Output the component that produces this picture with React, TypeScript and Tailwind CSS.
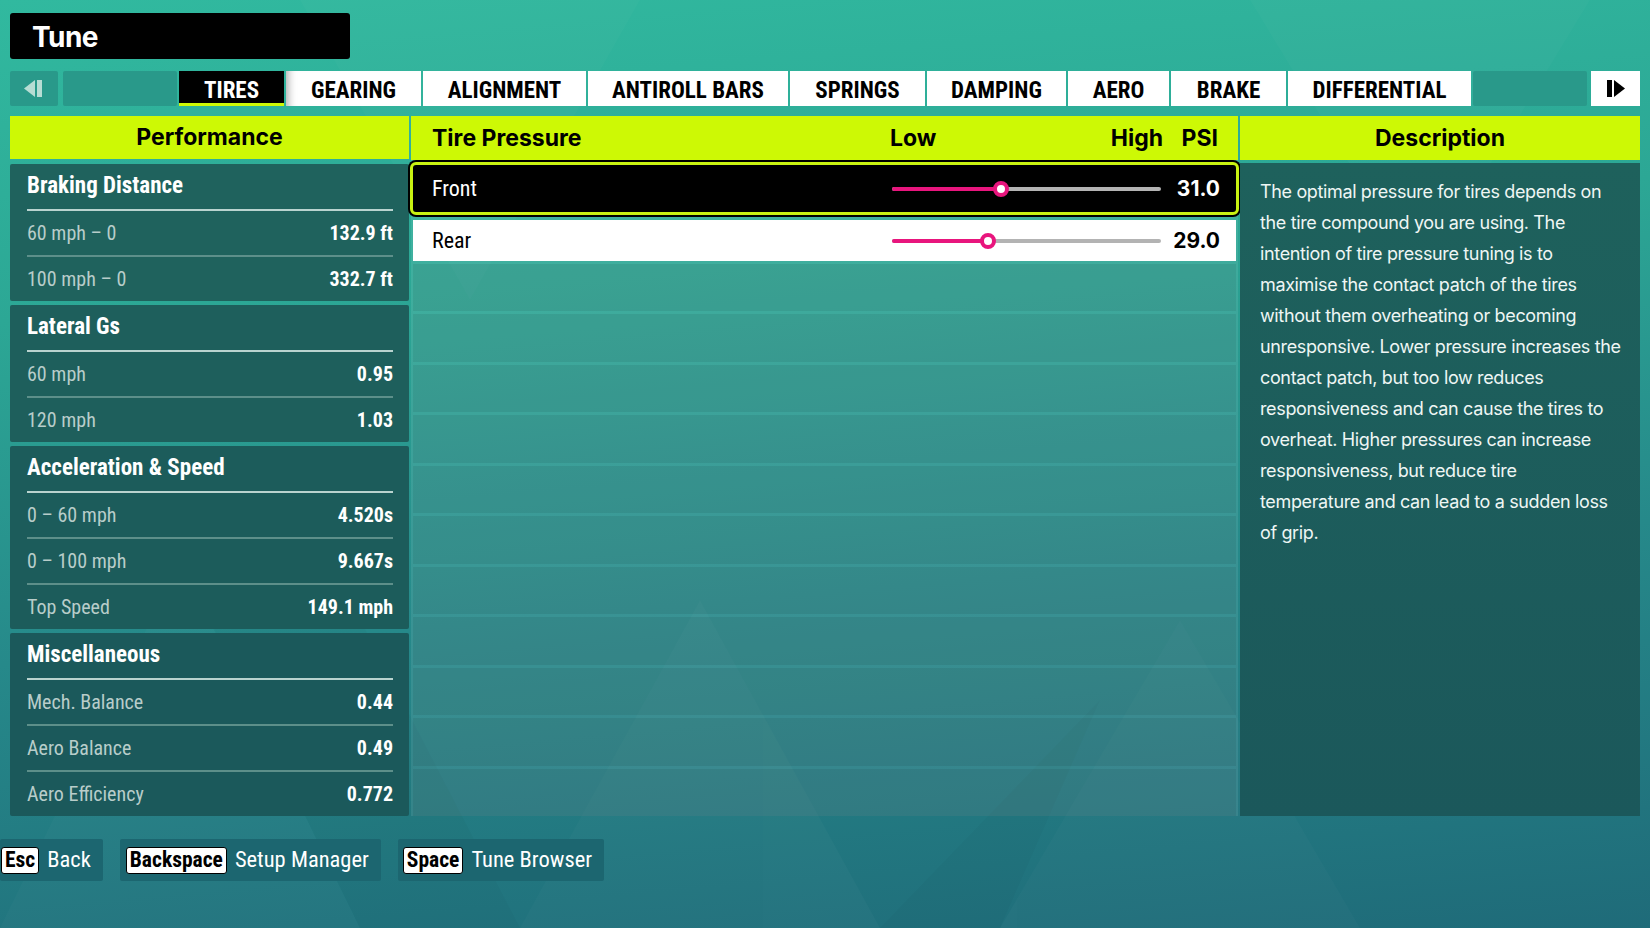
import React from "react";

const COND =
  "font-['Roboto_Condensed','Liberation_Sans_Narrow','Arial_Narrow','DejaVu_Sans_Condensed',Roboto,sans-serif] font-stretch-condensed";
const SANS = "font-['Inter','Noto_Sans',sans-serif]";

type Tab = { label: string; w: string; active?: boolean };

const tabs: Tab[] = [
  { label: "TIRES", w: "w-[105px]", active: true },
  { label: "GEARING", w: "w-[135px]" },
  { label: "ALIGNMENT", w: "w-[163px]" },
  { label: "ANTIROLL BARS", w: "w-[200px]" },
  { label: "SPRINGS", w: "w-[135px]" },
  { label: "DAMPING", w: "w-[139px]" },
  { label: "AERO", w: "w-[101px]" },
  { label: "BRAKE", w: "w-[115px]" },
  { label: "DIFFERENTIAL", w: "w-[183px]" },
];

type Stat = { title: string; bg: string; rows: [string, string][] };

const stats: Stat[] = [
  {
    title: "Braking Distance",
    bg: "bg-[#1f625d]",
    rows: [
      ["60 mph – 0", "132.9 ft"],
      ["100 mph – 0", "332.7 ft"],
    ],
  },
  {
    title: "Lateral Gs",
    bg: "bg-[#1e5f5c]",
    rows: [
      ["60 mph", "0.95"],
      ["120 mph", "1.03"],
    ],
  },
  {
    title: "Acceleration & Speed",
    bg: "bg-[#1c5c5b]",
    rows: [
      ["0 – 60 mph", "4.520s"],
      ["0 – 100 mph", "9.667s"],
      ["Top Speed", "149.1 mph"],
    ],
  },
  {
    title: "Miscellaneous",
    bg: "bg-[#1b595b]",
    rows: [
      ["Mech. Balance", "0.44"],
      ["Aero Balance", "0.49"],
      ["Aero Efficiency", "0.772"],
    ],
  },
];

const description = [
  "The optimal pressure for tires depends on",
  "the tire compound you are using. The",
  "intention of tire pressure tuning is to",
  "maximise the contact patch of the tires",
  "without them overheating or becoming",
  "unresponsive. Lower pressure increases the",
  "contact patch, but too low reduces",
  "responsiveness and can cause the tires to",
  "overheat. Higher pressures can increase",
  "responsiveness, but reduce tire",
  "temperature and can lead to a sudden loss",
  "of grip.",
];

function PrevIcon() {
  return (
    <svg width="22" height="17" viewBox="0 0 22 17">
      <polygon points="12,0 12,17 1,8.5" fill="#b7ddd4" />
      <rect x="14" y="0" width="5" height="17" fill="#b7ddd4" />
    </svg>
  );
}

function NextIcon() {
  return (
    <svg width="22" height="17" viewBox="0 0 22 17">
      <rect x="2" y="0" width="5" height="17" fill="#000" />
      <polygon points="9,0 9,17 20,8.5" fill="#000" />
    </svg>
  );
}

function Slider({ pct }: { pct: number }) {
  return (
    <div className="relative w-[269px] h-[16px] flex items-center">
      <div className="w-full h-[4px] rounded-full bg-[#b3b3b3]" />
      <div
        className="absolute left-0 h-[4px] rounded-full bg-[#e8157d]"
        style={{ width: `${pct}%` }}
      />
      <div
        className="absolute top-0 w-[16px] h-[16px] -ml-[8px] rounded-full bg-white border-[4px] border-[#e8157d]"
        style={{ left: `${pct}%` }}
      />
    </div>
  );
}

function StatCard({ stat }: { stat: Stat }) {
  return (
    <div className={`${stat.bg} rounded-[2px] pl-[17px] pr-[16px]`}>
      <div className={`${COND} h-[45px] flex items-center font-bold text-[23px] text-white`}>
        {stat.title}
      </div>
      {stat.rows.map(([k, v], i) => (
        <React.Fragment key={k}>
          <div className={i === 0 ? "h-[2px] bg-[#b9d3cf]" : "h-[2px] bg-[#5d8f8a]"} />
          <div className={`${COND} h-[44px] flex items-center justify-between text-[20px]`}>
            <span className="text-[#b8cdca]">{k}</span>
            <span className="text-white font-bold">{v}</span>
          </div>
        </React.Fragment>
      ))}
    </div>
  );
}

function KeyHint({ k, label, pad }: { k: string; label: string; pad: string }) {
  return (
    <div className={`h-[42px] flex items-center gap-[8px] ${pad} pr-[12px] bg-[#1c6670] rounded-[2px]`}>
      <span
        className={`${COND} h-[27px] px-[3px] flex items-center bg-white border-[1.5px] border-black rounded-[3px] text-black font-bold text-[21.5px] leading-none`}
      >
        {k}
      </span>
      <span className={`${COND} text-white text-[22.5px]`}>{label}</span>
    </div>
  );
}

export default function App() {
  return (
    <div className="w-[1650px] h-[928px] overflow-hidden relative bg-[linear-gradient(175deg,#31b99f_0%,#2ca795_30%,#26898a_62%,#1f6b79_100%)]">
      {/* faint triangle texture */}
      <svg className="absolute inset-0 pointer-events-none" width="1650" height="928">
        <g fill="#ffffff" opacity="0.018">
          <polygon points="0,928 180,560 360,928" />
          <polygon points="520,928 700,600 880,928" />
          <polygon points="1000,928 1180,620 1360,928" />
          <polygon points="300,0 470,300 640,0" />
          <polygon points="1250,0 1420,280 1590,0" />
        </g>
        <g fill="#000000" opacity="0.025">
          <polygon points="180,560 360,928 520,928 350,600" />
          <polygon points="880,928 1000,928 1100,700" />
        </g>
      </svg>

      <div className="relative px-[10px] pt-[13px]">
        {/* screen title */}
        <div className="w-[340px] h-[46px] bg-black rounded-[3px] flex items-center pl-[22px] pt-[2px]">
          <span className={`${SANS} font-bold text-[28px] text-white tracking-[-0.02em]`}>Tune</span>
        </div>

        {/* category tabs */}
        <div className="mt-[12px] h-[35px] flex gap-[2px]">
          <div className="w-[48px] bg-[#29998a] rounded-[2px] flex items-center justify-center">
            <PrevIcon />
          </div>
          <div className="w-[114px] bg-[#29998a] rounded-[2px] ml-[3px]" />
          {tabs.map((t) =>
            t.active ? (
              <div
                key={t.label}
                className={`${t.w} bg-black shadow-[inset_0_-3px_0_#cdf905] flex items-center justify-center pt-[5px]`}
              >
                <span className={`${COND} font-bold text-[23px] text-white`}>{t.label}</span>
              </div>
            ) : (
              <div
                key={t.label}
                className={`${t.w} bg-white flex items-center justify-center pt-[5px] ${
                  t.label === "GEARING" ? "shadow-[inset_10px_0_8px_-8px_rgba(0,0,0,0.35)]" : ""
                }`}
              >
                <span className={`${COND} font-bold text-[23px] text-black`}>{t.label}</span>
              </div>
            )
          )}
          <div className="flex-1 bg-[#29998a] rounded-[2px]" />
          <div className="w-[49px] bg-white ml-[2px] flex items-center justify-center">
            <NextIcon />
          </div>
        </div>

        {/* panels */}
        <div className="mt-[10px] h-[700px] flex gap-[2px]">
          {/* performance */}
          <div className="w-[399px] flex flex-col">
            <div className="h-[44px] bg-[#cdf905] flex items-center justify-center">
              <span className={`${SANS} font-bold text-[23px] text-black`}>Performance</span>
            </div>
            <div className="mt-[5px] flex flex-col gap-[4px]">
              {stats.map((s) => (
                <StatCard key={s.title} stat={s} />
              ))}
            </div>
          </div>

          {/* tire pressure */}
          <div className="w-[827px] flex flex-col">
            <div className={`${SANS} h-[44px] bg-[#cdf905] flex items-center pl-[21px] pr-[20px] font-bold text-[23px] text-black`}>
              <span className="flex-1">Tire Pressure</span>
              <div className="w-[273px] flex justify-between">
                <span>Low</span>
                <span>High</span>
              </div>
              <span className="w-[55px] text-right">PSI</span>
            </div>
            <div className="flex-1 flex flex-col gap-[3px] pt-[2px] px-[2px] bg-white/[0.09]">
              <div className="h-[53px] -mx-[3px] bg-black border-[3px] border-[#c9f212] rounded-[6px] shadow-[0_0_0_2px_#000] flex items-center pl-[19px] pr-[16px]">
                <span className={`${COND} flex-1 text-white text-[22px]`}>Front</span>
                <Slider pct={40.5} />
                <span className={`${SANS} w-[59px] text-right font-bold text-[21px] text-white`}>31.0</span>
              </div>
              <div className="h-[41px] mt-[2px] bg-white flex items-center pl-[19px] pr-[16px]">
                <span className={`${COND} flex-1 text-black text-[22px]`}>Rear</span>
                <Slider pct={35.7} />
                <span className={`${SANS} w-[59px] text-right font-bold text-[21px] text-black`}>29.0</span>
              </div>
              {Array.from({ length: 11 }).map((_, i) => (
                <div key={i} className="flex-1 bg-black/[0.07]" />
              ))}
            </div>
          </div>

          {/* description */}
          <div className="w-[400px] flex flex-col">
            <div className="h-[44px] bg-[#cdf905] flex items-center justify-center">
              <span className={`${SANS} font-bold text-[23px] text-black`}>Description</span>
            </div>
            <div className="flex-1 mt-[3px] bg-[linear-gradient(180deg,#1e615c_0%,#1b585b_100%)] pl-[20px] pt-[13px]">
              <div className={`${SANS} text-[18px] leading-[31px] text-[#eef6f4] tracking-[-0.02em]`}>
                {description.map((line) => (
                  <div key={line} className="whitespace-nowrap">
                    {line}
                  </div>
                ))}
              </div>
            </div>
          </div>
        </div>
      </div>

      {/* control hints */}
      <div className="relative mt-[23px] flex gap-[17px]">
        <KeyHint k="Esc" label="Back" pad="pl-[1px]" />
        <KeyHint k="Backspace" label="Setup Manager" pad="pl-[6px]" />
        <KeyHint k="Space" label="Tune Browser" pad="pl-[5px]" />
      </div>
    </div>
  );
}
